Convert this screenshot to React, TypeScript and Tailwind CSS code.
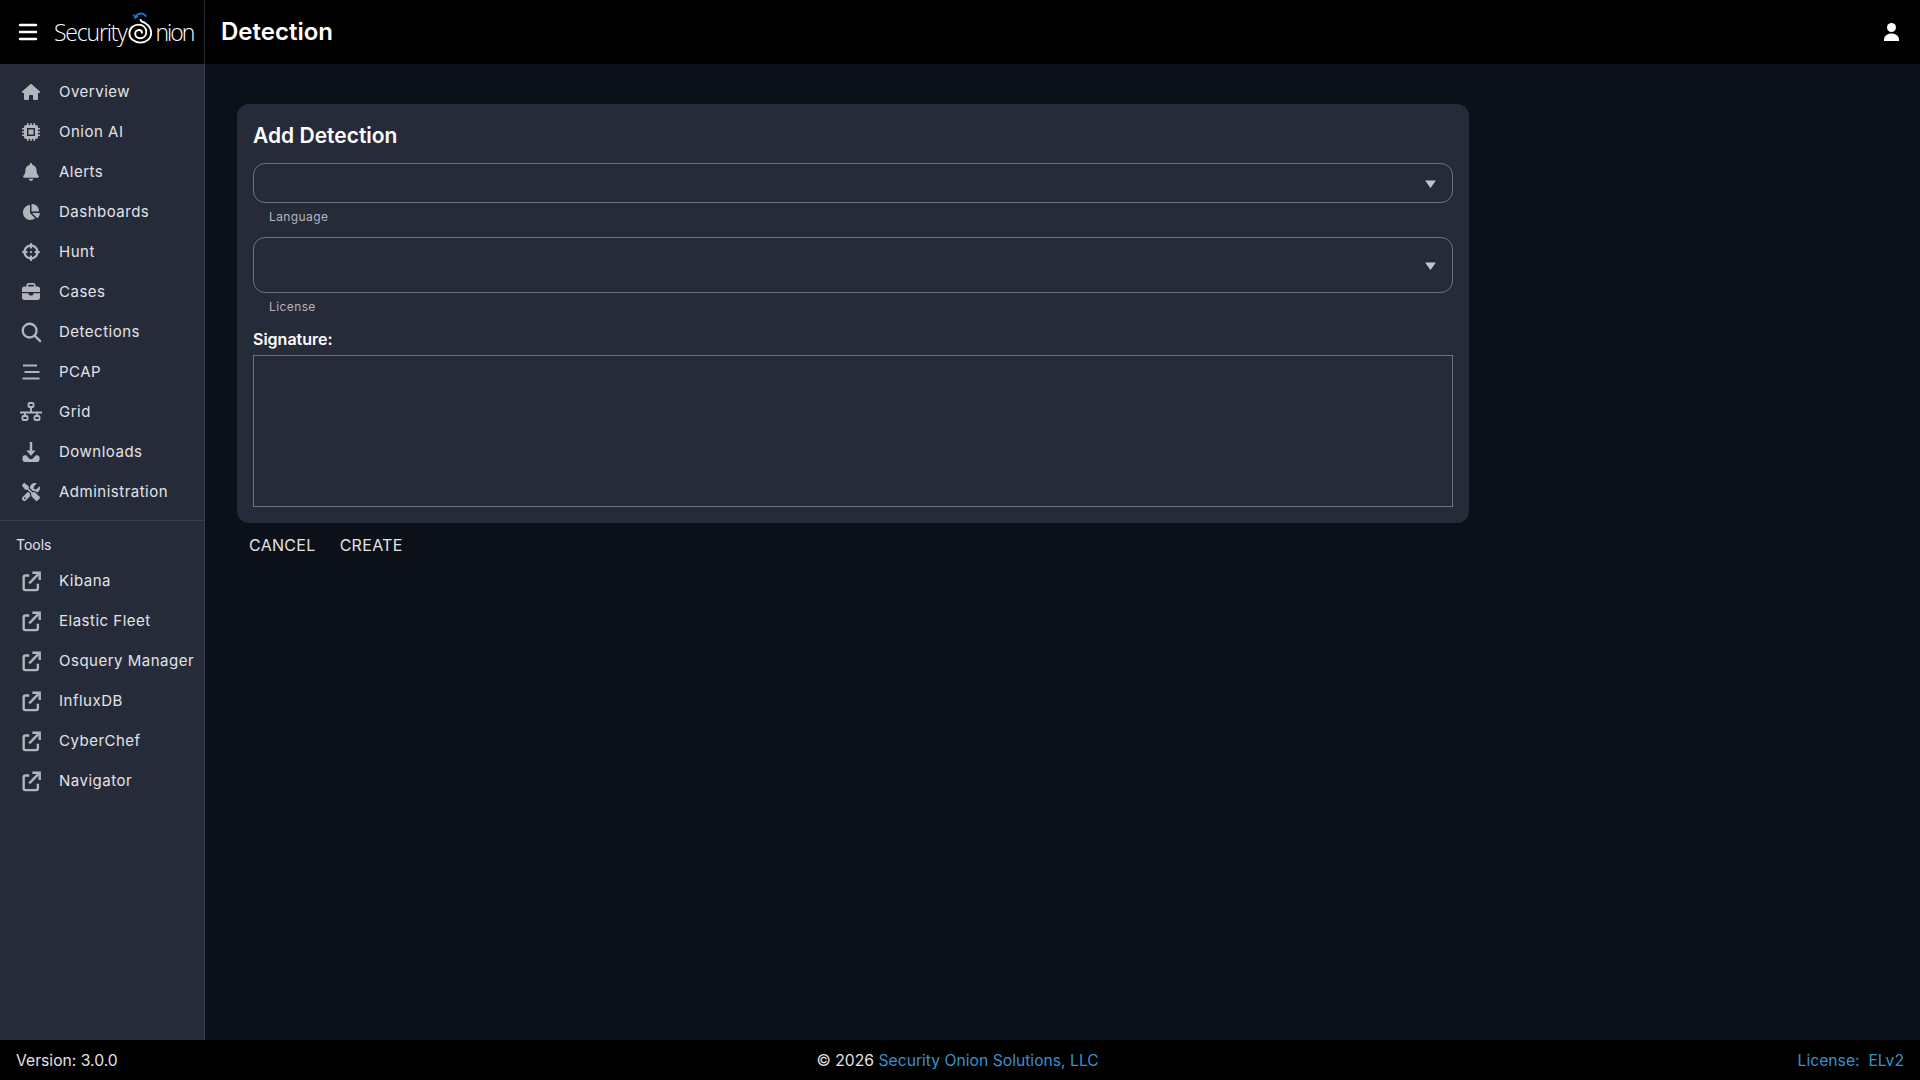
import type { ReactNode } from 'react';
import { FaBell, FaBriefcase, FaChartPie, FaCrosshairs, FaHouse, FaScrewdriverWrench } from 'react-icons/fa6';
import { Menu } from 'lucide-react';

const iconClass = 'h-[18px] w-[18px]';

function ChipIcon() {
  return (
    <svg viewBox="0 0 18 18" className={iconClass} fill="currentColor">
      <path
        fillRule="evenodd"
        d="M4 2h10a2 2 0 0 1 2 2v10a2 2 0 0 1-2 2H4a2 2 0 0 1-2-2V4a2 2 0 0 1 2-2zm1 3v8h8V5z"
      />
      <rect x="6.500" y="6.500" width="5" height="5" />
      <path d="M5 0h1.500v2H5zM8.250 0h1.500v2h-1.500zM11.500 0H13v2h-1.500zM5 16h1.500v2H5zM8.250 16h1.500v2h-1.500zM11.500 16H13v2h-1.500zM0 5h2v1.500H0zM0 8.250h2v1.500H0zM0 11.500h2V13H0zM16 5h2v1.500h-2zM16 8.250h2v1.500h-2zM16 11.500h2V13h-2z" />
    </svg>
  );
}

function SearchIcon() {
  return (
    <svg viewBox="0 0 24 24" className="h-[22px] w-[22px]" fill="none" stroke="currentColor" strokeWidth="2.5" strokeLinecap="round">
      <circle cx="10.500" cy="10.500" r="7.500" />
      <path d="m16 16 6 6" />
    </svg>
  );
}

function PcapIcon() {
  return (
    <svg viewBox="0 0 24 24" className="h-6 w-6" fill="none" stroke="currentColor" strokeWidth="2.2">
      <path d="M4 5.500h14M5.500 12h15M3.500 18.500h17" />
    </svg>
  );
}

function GridIcon() {
  return (
    <svg viewBox="0 0 24 24" className="h-6 w-6" fill="none" stroke="currentColor" strokeWidth="1.9">
      <rect x="9.500" y="3" width="5" height="4" rx="1" />
      <rect x="3.500" y="16" width="5" height="4" rx="1" />
      <rect x="15.500" y="16" width="5" height="4" rx="1" />
      <path d="M12 7v6M1 12.500h22M6 13v3M18 13v3" />
    </svg>
  );
}

function DownloadIcon() {
  return (
    <svg viewBox="0 0 24 24" className="h-6 w-6" fill="currentColor">
      <path d="M10.800 2h2.400v8.500h3.500L12 15.800 7.300 10.500h3.500z" />
      <path d="M3.500 17.500c0-1.200 1-2.200 2.200-2.200h1.500l3 3.200c1 1 2.600 1 3.600 0l3-3.200h1.500c1.200 0 2.200 1 2.200 2.200v2.300c0 1.200-1 2.200-2.200 2.200H5.700c-1.200 0-2.200-1-2.200-2.200z" />
    </svg>
  );
}

function ExternalIcon() {
  return (
    <svg viewBox="0 0 24 24" className="-ml-px h-[22px] w-[22px]" fill="none" stroke="currentColor" strokeWidth="2.600">
      <path d="M10 6H6a2 2 0 0 0-2 2v12a2 2 0 0 0 2 2h11.500a2 2 0 0 0 2-2v-5" />
      <path d="m10 14.500 10-10" />
      <path d="M13.500 3h8v8" />
    </svg>
  );
}

function UserIcon() {
  return (
    <svg viewBox="0 0 15 18" className="h-[18px] w-[15px]" fill="currentColor">
      <circle cx="7.500" cy="4.500" r="4.500" />
      <path d="M0 18v-1.500C0 13 3.500 10.500 7.500 10.500S15 13 15 16.500V18z" />
    </svg>
  );
}

function CaretDown() {
  return (
    <svg viewBox="0 0 12 8" className="mt-[2px] h-2 w-[13px]" fill="currentColor">
      <path d="M0.600 0.500h10.800L6.600 7.300a0.700 0.700 0 0 1-1.200 0z" />
    </svg>
  );
}

function Logo() {
  return (
    <div className="flex h-full items-center font-['Open_Sans',sans-serif] text-[23px] leading-none font-light tracking-[-1.2px] text-white">
      <span>Security</span>
      <svg viewBox="0 0 30 40" className="-mt-[4px] h-[40px] w-[29px]" fill="none" strokeLinecap="round">
        <path d="M9.500 7c1.500-4.500 8-5.500 11-1.500" stroke="#1976d2" strokeWidth="2" />
        <path d="m8 4.500 1.500 3 2.500-1.500" stroke="#1976d2" strokeWidth="1.600" />
        <path
          d="M15 9.500c1 2.500 3 2 5 3.500 4 2.500 6 6 6 10 0 6-5 10-11 10S3.500 29 3.500 23.500C3.500 18 8 14.500 13 14.500c4.500 0 8 3 8 7.500 0 4-3 6.500-6.500 6.500-3 0-5-2-5-4.500s2-4 4-4c1.800 0 3 1.200 3 2.800"
          stroke="#fff"
          strokeWidth="1.900"
        />
      </svg>
      <span className="tracking-[-2px]">nion</span>
    </div>
  );
}

function NavItem({ icon, label }: { icon: ReactNode; label: string }) {
  return (
    <div className="flex h-10 items-center pl-[19px]">
      <span className="flex h-6 w-6 shrink-0 items-center justify-center text-[#b4b5bc]">{icon}</span>
      <span className="ml-4 text-[15px] tracking-[0.5px] whitespace-nowrap text-[#e3e3e6]">{label}</span>
    </div>
  );
}

function SelectField({ label, height }: { label: string; height: string }) {
  return (
    <div>
      <div className={`flex items-center justify-end rounded-xl border border-[#6f7280] pr-[15px] text-[#c3c4c9] ${height}`}>
        <CaretDown />
      </div>
      <div className="h-[34px] pt-[6px] pl-4 text-xs leading-4 tracking-[0.4px] text-[#b4b5bc]">{label}</div>
    </div>
  );
}

const mainItems = [
  { label: 'Overview', icon: <FaHouse className={iconClass} /> },
  { label: 'Onion AI', icon: <ChipIcon /> },
  { label: 'Alerts', icon: <FaBell className={iconClass} /> },
  { label: 'Dashboards', icon: <FaChartPie className={iconClass} /> },
  { label: 'Hunt', icon: <FaCrosshairs className={iconClass} /> },
  { label: 'Cases', icon: <FaBriefcase className={iconClass} /> },
  { label: 'Detections', icon: <SearchIcon /> },
  { label: 'PCAP', icon: <PcapIcon /> },
  { label: 'Grid', icon: <GridIcon /> },
  { label: 'Downloads', icon: <DownloadIcon /> },
  { label: 'Administration', icon: <FaScrewdriverWrench className={iconClass} /> },
];

const toolItems = ['Kibana', 'Elastic Fleet', 'Osquery Manager', 'InfluxDB', 'CyberChef', 'Navigator'];

export default function App() {
  return (
    <div className="flex h-screen flex-col bg-[#0c1018] font-['Inter',sans-serif] text-white">
      <header className="flex h-16 shrink-0 items-center bg-black">
        <div className="flex h-full w-[205px] shrink-0 items-center border-r border-[#2b2d35] pl-4">
          <Menu className="h-6 w-6" strokeWidth={2.4} />
          <div className="ml-[14px] h-full">
            <Logo />
          </div>
        </div>
        <h1 className="ml-4 text-2xl font-semibold">Detection</h1>
        <span className="mr-[21px] ml-auto">
          <UserIcon />
        </span>
      </header>

      <div className="flex min-h-0 flex-1">
        {/* Left nav */}
        <aside className="w-[205px] shrink-0 border-r border-[#3a3e4e] bg-[#262b3a]">
          <nav className="py-2">
            {mainItems.map((item) => (
              <NavItem key={item.label} icon={item.icon} label={item.label} />
            ))}
          </nav>
          <div className="border-t border-[#3a3e4e]">
            <div className="flex h-10 items-center pt-2 pl-4 text-sm text-[#e3e3e6]">Tools</div>
            {toolItems.map((label) => (
              <NavItem key={label} icon={<ExternalIcon />} label={label} />
            ))}
          </div>
        </aside>

        <main className="flex-1 pt-10 pl-8">
          <section className="w-[1232px] rounded-xl bg-[#262b3a] px-4 pt-4 pb-4">
            <h2 className="mb-[11px] text-[21px] leading-8 font-semibold">Add Detection</h2>
            <SelectField label="Language" height="h-10" />
            <SelectField label="License" height="h-14" />
            <div className="mb-1 leading-6 font-semibold">Signature:</div>
            <textarea className="block h-[152px] w-full resize-none border border-[#6f7280] bg-transparent" />
          </section>
          <div className="mt-1 flex">
            <button className="h-9 px-3 text-base tracking-[0.3px] text-[#e3e3e6]">CANCEL</button>
            <button className="h-9 px-3 text-base tracking-[0.3px] text-[#e3e3e6]">CREATE</button>
          </div>
        </main>
      </div>

      <footer className="flex h-10 shrink-0 items-center justify-between bg-black px-4 pt-px text-[15.7px] text-[#e3e3e6]">
        <span>Version: 3.0.0</span>
        <span>
          © 2026 <a className="text-[#3592cf]">Security Onion Solutions, LLC</a>
        </span>
        <a className="text-[#3592cf]">License:&nbsp; ELv2</a>
      </footer>
    </div>
  );
}
